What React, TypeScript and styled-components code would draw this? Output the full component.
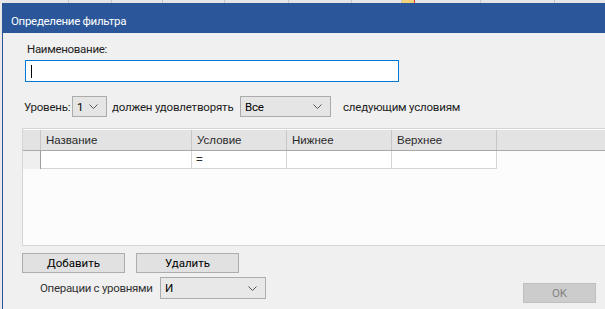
import styled, { createGlobalStyle } from "styled-components";

const GlobalStyle = createGlobalStyle`
  html, body {
    margin: 0;
    padding: 0;
    overflow: hidden;
    background: #e9e9e9;
  }
  body {
    font-family: Roboto, "Noto Sans", sans-serif;
  }
`;

const ui = `Roboto, "Noto Sans", sans-serif`;
const classic = `"Liberation Sans", Arial, sans-serif`;

const sheetCells = [68, 42, 50, 61, 63, 62, 49, 12, 65, 73, 60];

const columns = [
  { title: "Название", width: 151, value: "" },
  { title: "Условие", width: 95, value: "=" },
  { title: "Нижнее", width: 105, value: "" },
  { title: "Верхнее", width: 105, value: "" },
];

const Chevron = () => (
  <svg width="9" height="5" viewBox="0 0 9 5">
    <polyline points="0.5,0.5 4.5,4.5 8.5,0.5" fill="none" stroke="#555" strokeWidth="1" />
  </svg>
);

const Select = ({ value, width }: { value: string; width: number }) => (
  <SelectBox style={{ width }}>
    <span>{value}</span>
    <Chevron />
  </SelectBox>
);

export default function App() {
  return (
    <>
      <GlobalStyle />
      <Page>
        <SheetStrip>
          {sheetCells.map((w, i) => (
            <SheetCell key={i} $w={w} $mark={i === 7} />
          ))}
        </SheetStrip>
        <Dialog>
          <TitleBar>Определение фильтра</TitleBar>
          <Body>
            <Label>Наименование:</Label>
            <NameInput>
              <Caret />
            </NameInput>
            <LevelRow>
              <Text $w={48}>Уровень:</Text>
              <Select value="1" width={35} />
              <Text $w={128} $gap={5}>должен удовлетворять</Text>
              <Select value="Все" width={91} />
              <Text $gap={12}>следующим условиям</Text>
            </LevelRow>
            <Grid>
              <HeaderRow>
                <RowHeadCell />
                {columns.map((c) => (
                  <HeadCell key={c.title} $w={c.width}>
                    {c.title}
                  </HeadCell>
                ))}
                <HeadFill />
              </HeaderRow>
              <DataRow>
                <RowSelector />
                {columns.map((c) => (
                  <DataCell key={c.title} $w={c.width}>
                    {c.value}
                  </DataCell>
                ))}
              </DataRow>
            </Grid>
            <Footer>
              <FooterLeft>
                <ButtonRow>
                  <Button>Добавить</Button>
                  <Button>Удалить</Button>
                </ButtonRow>
                <OpsRow>
                  <OpsLabel>Операции с уровнями</OpsLabel>
                  <Select value="И" width={106} />
                </OpsRow>
              </FooterLeft>
              <OkButton disabled>OK</OkButton>
            </Footer>
          </Body>
        </Dialog>
      </Page>
    </>
  );
}

const Page = styled.div`
  width: 605px;
  height: 309px;
  display: flex;
  flex-direction: column;
  overflow: hidden;
`;

const SheetStrip = styled.div`
  height: 3px;
  display: flex;
  background: #e4e4e4;
`;

const SheetCell = styled.div<{ $w: number; $mark?: boolean }>`
  width: ${(p) => p.$w}px;
  flex-shrink: 0;
  border-right: 1px solid ${(p) => (p.$mark ? "#d83a3a" : "#c8c8c8")};
  background: ${(p) => (p.$mark ? "#f2d27a" : "#e6e6e6")};
`;

const Dialog = styled.div`
  flex: 1;
  margin-left: 2px;
  border-left: 1px solid #2b579a;
  display: flex;
  flex-direction: column;
  background: #f0f0f0;
`;

const TitleBar = styled.div`
  height: 30px;
  background: #2b579a;
  color: #fff;
  font-family: ${ui};
  font-size: 11.5px;
  letter-spacing: -0.3px;
  line-height: 30px;
  padding: 3px 0 0 9px;
  box-sizing: border-box;
  margin-left: -1px;
`;

const Body = styled.div`
  display: flex;
  flex-direction: column;
  padding: 8px 0 0 19px;
  font-family: ${ui};
  font-size: 11.5px;
  letter-spacing: -0.2px;
  color: #222;
`;

const Label = styled.div`
  line-height: 16px;
  padding-left: 5px;
  letter-spacing: -0.3px;
`;

const NameInput = styled.div`
  margin: 3px 0 0 3px;
  width: 374px;
  height: 22px;
  box-sizing: border-box;
  border: 1px solid #0078d7;
  background: #fff;
  display: flex;
  align-items: center;
  padding-left: 5px;
`;

const Caret = styled.div`
  width: 1px;
  height: 13px;
  background: #000;
`;

const LevelRow = styled.div`
  margin-top: 14px;
  padding-left: 2px;
  height: 21px;
  display: flex;
  align-items: center;
`;

const Text = styled.span<{ $gap?: number; $w?: number }>`
  margin-left: ${(p) => p.$gap ?? 0}px;
  ${(p) => (p.$w ? `width: ${p.$w}px; flex-shrink: 0;` : "")}
  white-space: nowrap;
`;

const SelectBox = styled.div`
  height: 21px;
  box-sizing: border-box;
  border: 1px solid #acacac;
  background: #e5e5e5;
  display: flex;
  align-items: center;
  justify-content: space-between;
  padding: 0 8px 0 4px;
  color: #000;
  font-family: ${ui};
  font-size: 11.5px;
`;

const Grid = styled.div`
  margin-top: 11px;
  height: 118px;
  box-sizing: border-box;
  border: 1px solid #d5d5d5;
  border-right: 0;
  background: #fcfcfc;
  font-family: ${classic};
  font-size: 11.5px;
  letter-spacing: 0;
  color: #2a2a2a;
`;

const HeaderRow = styled.div`
  display: flex;
  height: 22px;
  box-sizing: border-box;
  border-top: 1px solid #fcfcfc;
  border-bottom: 1px solid #a9a9a9;
  background: #e3e3e3;
`;

const RowHeadCell = styled.div`
  width: 17px;
  flex-shrink: 0;
`;

const HeadCell = styled.div<{ $w: number }>`
  width: ${(p) => p.$w}px;
  flex-shrink: 0;
  box-sizing: border-box;
  border-left: 1px solid #c6c6c6;
  padding-left: 5px;
  line-height: 20px;
`;

const HeadFill = styled.div`
  flex: 1;
  border-left: 1px solid #c6c6c6;
`;

const DataRow = styled.div`
  display: flex;
  height: 18px;
`;

const RowSelector = styled.div`
  width: 17px;
  flex-shrink: 0;
  background: #efefef;
  border-right: 1px solid #a0a0a0;
`;

const DataCell = styled.div<{ $w: number }>`
  width: ${(p) => p.$w}px;
  flex-shrink: 0;
  box-sizing: border-box;
  background: #fff;
  border-right: 1px solid #d4d4d4;
  border-bottom: 1px solid #d4d4d4;
  padding-left: 4px;
  line-height: 17px;
  &:first-of-type {
    width: ${(p) => p.$w - 1}px;
  }
`;

const Footer = styled.div`
  margin-top: 7px;
  display: flex;
  justify-content: space-between;
`;

const FooterLeft = styled.div`
  display: flex;
  flex-direction: column;
`;

const ButtonRow = styled.div`
  display: flex;
  gap: 11px;
`;

const Button = styled.button`
  width: 103px;
  height: 20px;
  box-sizing: border-box;
  border: 1px solid #adadad;
  background: #e1e1e1;
  font-family: ${ui};
  font-size: 11.5px;
  color: #000;
  padding: 0;
  margin: 0;
`;

const OpsRow = styled.div`
  margin-top: 4px;
  display: flex;
  align-items: center;
  padding-left: 18px;
  color: #333;
  ${SelectBox} {
    height: 22px;
    background: #e8e8e8;
  }
`;

const OpsLabel = styled.span`
  width: 120px;
  white-space: nowrap;
  letter-spacing: -0.3px;
`;

const OkButton = styled.button`
  align-self: flex-end;
  margin: 0 9px -4px 0;
  width: 73px;
  height: 20px;
  box-sizing: border-box;
  border: 1px solid #bfbfbf;
  background: #cccccc;
  color: #838383;
  font-family: ${ui};
  font-size: 11.5px;
  padding: 0;
`;
